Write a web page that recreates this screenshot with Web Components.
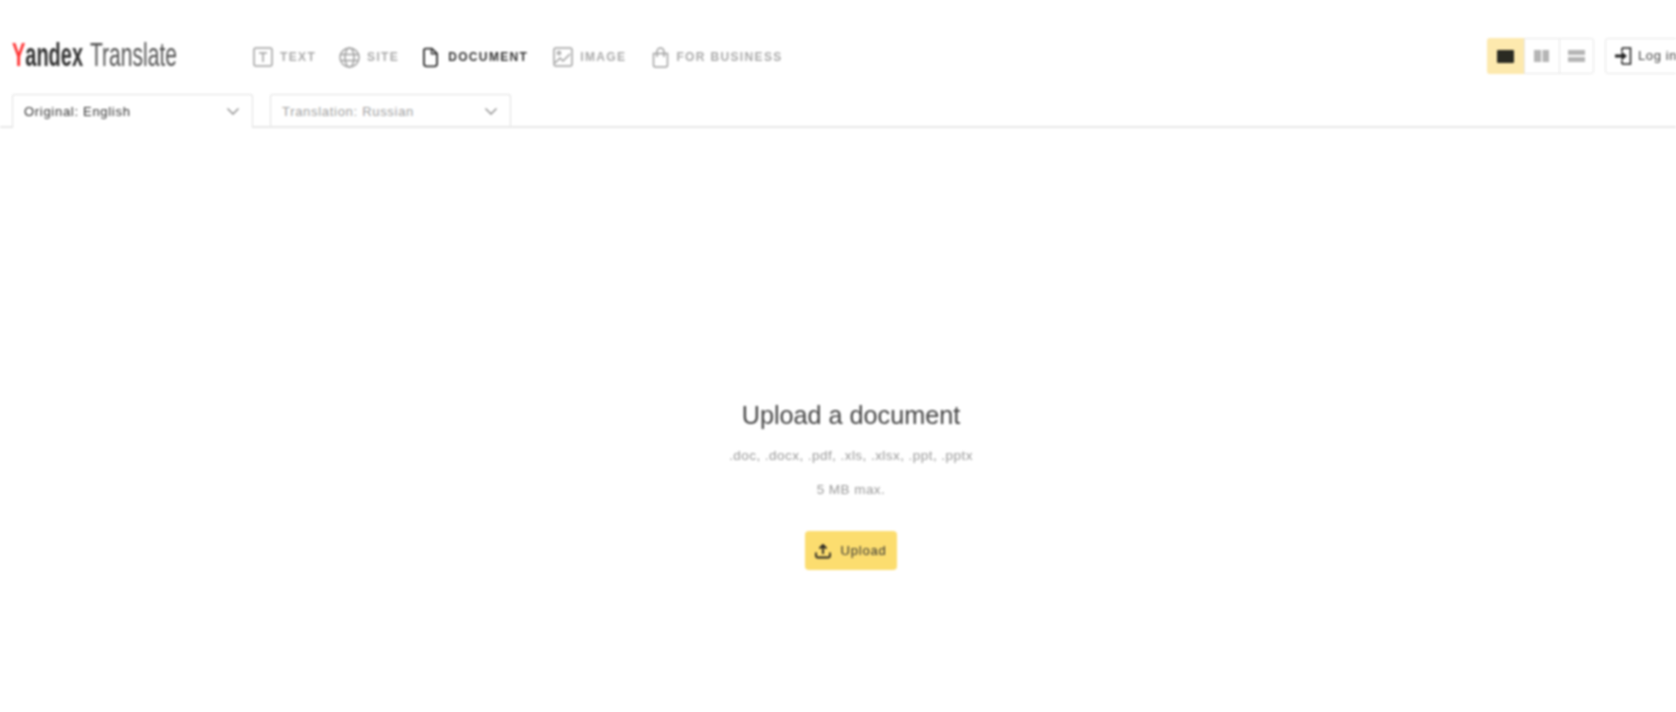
<!doctype html>
<html lang="en">
<head>
<meta charset="utf-8">
<title>Yandex Translate</title>
<style>
  html, body { margin: 0; height: 100%; background: #fff; overflow: hidden; }
  body { font-family: "Liberation Sans", Arial, sans-serif; }
  yt-app { filter: blur(0.8px); }
</style>
</head>
<body>
<yt-app>
  <yt-header slot="header"></yt-header>
  <yt-langbar slot="header"></yt-langbar>
  <yt-upload></yt-upload>
</yt-app>

<script>
// App shell ---------------------------------------------------------
class YtApp extends HTMLElement {
  constructor() {
    super();
    this.attachShadow({ mode: 'open' }).innerHTML = `
      <style>
        :host { display: flex; flex-direction: column; height: 712px; overflow: hidden; }
        .top { border-bottom: 2px solid #e8e8e8; height: 126px; flex: none; }
        .main { flex: 1; display: flex; justify-content: center; }
      </style>
      <div class="top"><slot name="header"></slot></div>
      <div class="main"><slot></slot></div>
    `;
  }
}

// Nav tab -----------------------------------------------------------
class YtTab extends HTMLElement {
  constructor() {
    super();
    this.attachShadow({ mode: 'open' }).innerHTML = `
      <style>
        :host {
          display: flex; align-items: center; gap: 7px;
          font: 700 12px "Liberation Sans", Arial, sans-serif;
          letter-spacing: 1.35px; color: #aaa;
        }
        :host([active]) { color: #333; gap: 10px; }
        ::slotted(svg) { display: block; flex: none; }
      </style>
      <slot name="icon"></slot><slot></slot>
    `;
  }
}

// Header ------------------------------------------------------------
class YtHeader extends HTMLElement {
  constructor() {
    super();
    this.attachShadow({ mode: 'open' }).innerHTML = `
      <style>
        :host {
          display: flex; align-items: center; box-sizing: border-box;
          width: 1700px; height: 94px; padding: 38px 0 20px 12px;
        }
        .logo {
          width: 241px; height: 36px; flex: none; display: flex; align-items: center; white-space: nowrap;
          padding-bottom: 4px; box-sizing: border-box;
          font: 400 34px "Liberation Sans", Arial, sans-serif;
        }
        .logo span { display: block; transform-origin: 0 50%; }
        .yandex { width: 78px; font-weight: 700; color: #333; transform: scaleX(.587); }
        .yandex b { color: #f33; }
        .translate { color: #555; transform: scaleX(.62); }
        nav { display: flex; gap: 24px; margin-top: 2px; }
        .site { margin-left: -1px; }
        .image { margin-left: 1px; }
        .biz { margin-left: 2px; }
        .views {
          margin-left: auto; display: flex; height: 36px; box-sizing: border-box;
          border: 1px solid #e6e6e6; border-radius: 3px; width: 107px; flex: none;
        }
        .views div { flex: 1; display: flex; align-items: center; justify-content: center; }
        .views div + div { border-left: 1px solid #e6e6e6; }
        .views .on { background: #fde9ae; margin: -1px 0 -1px -1px; border-radius: 3px 0 0 3px; flex: 0 0 37px; }
        .login {
          margin-left: 11px; margin-right: 9px; width: 86px; height: 36px; box-sizing: border-box; flex: none;
          border: 1px solid #e6e6e6; border-radius: 3px; display: flex; align-items: center; gap: 6px;
          padding-left: 9px; font: 13px "Liberation Sans", Arial, sans-serif; letter-spacing: .6px; color: #444;
        }
        .login span { margin-top: -1px; }
      </style>
      <div class="logo"><span class="yandex"><b>Y</b>andex</span><span class="translate">Translate</span></div>
      <nav>
        <yt-tab>
          <svg slot="icon" width="20" height="20" viewBox="0 0 20 20" fill="none" stroke="#a0a0a0" stroke-width="1.5"><rect x="1" y="1" width="18" height="18" rx="2"/><path d="M6 6h8M10 6v9"/></svg>TEXT
        </yt-tab>
        <yt-tab class="site">
          <svg slot="icon" width="21" height="21" viewBox="0 0 21 21" fill="none" stroke="#a0a0a0" stroke-width="1.5"><circle cx="10.5" cy="10.5" r="9.5"/><ellipse cx="10.5" cy="10.5" rx="4.5" ry="9.5"/><path d="M1 7.5h19M1 13.5h19"/></svg>SITE
        </yt-tab>
        <yt-tab active>
          <svg slot="icon" width="15" height="21" viewBox="0 0 16 21" fill="none" stroke="#333" stroke-width="2"><path d="M3 1h6.500L15 6.500V17a3 3 0 0 1-3 3H4a3 3 0 0 1-3-3V3a2 2 0 0 1 2-2z"/><path d="M9 1v5.500h5.500" stroke-width="1.500"/></svg>DOCUMENT
        </yt-tab>
        <yt-tab class="image">
          <svg slot="icon" width="20" height="20" viewBox="0 0 20 20" fill="none" stroke="#a0a0a0" stroke-width="1.5"><rect x="1" y="1" width="18" height="18" rx="2"/><circle cx="6" cy="6" r="1.500"/><path d="M2 16l5-5 3 3 7-7"/></svg>IMAGE
        </yt-tab>
        <yt-tab class="biz">
          <svg slot="icon" width="17" height="21" viewBox="0 0 17 21" fill="none" stroke="#a0a0a0" stroke-width="1.5"><path d="M1.500 6.500h14V18a2 2 0 0 1-2 2h-10a2 2 0 0 1-2-2z"/><path d="M5 10V4.500a3.500 3.500 0 0 1 7 0V10"/></svg>FOR BUSINESS
        </yt-tab>
      </nav>
      <div class="views">
        <div class="on"><svg width="17" height="13"><rect width="17" height="13" rx="1" fill="#2a2a22"/></svg></div>
        <div><svg width="15" height="12" fill="#b5b5b5"><rect width="7" height="12"/><rect x="8.500" width="6.500" height="12"/></svg></div>
        <div><svg width="17" height="12" fill="#b5b5b5"><rect width="17" height="5"/><rect y="7" width="17" height="5"/></svg></div>
      </div>
      <div class="login">
        <svg width="17" height="18" viewBox="0 0 17 18" fill="none" stroke="#222" stroke-width="1.600"><path d="M7 1h8.500v16H7M7 1v3.500M7 13.500V17"/><path d="M0 9h8" stroke-width="3"/><path d="M6.500 4.500L12 9l-5.500 4.500z" fill="#222" stroke="none"/></svg>
        <span>Log in</span>
      </div>
    `;
  }
}

// Language tab ------------------------------------------------------
class YtLang extends HTMLElement {
  constructor() {
    super();
    this.attachShadow({ mode: 'open' }).innerHTML = `
      <style>
        :host {
          display: flex; align-items: center; justify-content: space-between; box-sizing: border-box;
          width: 241px; height: 34px; padding: 0 13px 0 11px;
          background: #fff; border: 1px solid #e0e0e0; border-bottom: 0; border-radius: 3px 3px 0 0;
          font: 13px "Liberation Sans", Arial, sans-serif; letter-spacing: .7px; color: #333;
        }
        :host([muted]) { color: #a0a0a0; height: 32px; padding-top: 2px; }
        svg { display: block; flex: none; }
      </style>
      <slot></slot>
      <svg width="12" height="7" viewBox="0 0 12 7" fill="none" stroke="#8a8a8a" stroke-width="1.300"><path d="M.5.5L6 6l5.500-5.500"/></svg>
    `;
  }
}

class YtLangbar extends HTMLElement {
  constructor() {
    super();
    this.attachShadow({ mode: 'open' }).innerHTML = `
      <style>
        :host { display: flex; gap: 17px; align-items: flex-start; padding-left: 12px; }
      </style>
      <yt-lang>Original: English</yt-lang>
      <yt-lang muted>Translation: Russian</yt-lang>
    `;
  }
}

// Upload panel ------------------------------------------------------
class YtUpload extends HTMLElement {
  constructor() {
    super();
    this.attachShadow({ mode: 'open' }).innerHTML = `
      <style>
        :host {
          display: flex; flex-direction: column; align-items: center;
          padding-top: 272px; margin-left: 26px;
          font-family: "Liberation Sans", Arial, sans-serif;
        }
        h1 { margin: 0; font-size: 25.200px; font-weight: 400; line-height: 30px; color: #444; }
        p { margin: 0; font-size: 13.500px; line-height: 16px; letter-spacing: .45px; color: #999; }
        .formats { margin-top: 18px; }
        .size { margin-top: 18px; }
        button {
          margin-top: 33px; width: 92px; height: 39px; border: 0; border-radius: 4px; padding: 0;
          background: #fcdd6f; color: #333; display: flex; align-items: center; justify-content: center; gap: 9px;
          font: 13px "Liberation Sans", Arial, sans-serif; letter-spacing: .8px;
        }
        svg { display: block; }
      </style>
      <h1>Upload a document</h1>
      <p class="formats">.doc, .docx, .pdf, .xls, .xlsx, .ppt, .pptx</p>
      <p class="size">5 MB max.</p>
      <button>
        <svg width="16" height="16" viewBox="0 0 16 16" fill="none" stroke="#222" stroke-width="1.800"><path d="M1 9.500V13a1.500 1.500 0 0 0 1.500 1.500h11A1.500 1.500 0 0 0 15 13V9.500"/><path d="M8 11V2.500M4.500 5.500L8 2l3.500 3.500"/></svg>
        Upload
      </button>
    `;
  }
}

// Register elements -------------------------------------------------
customElements.define('yt-tab', YtTab);
customElements.define('yt-header', YtHeader);
customElements.define('yt-lang', YtLang);
customElements.define('yt-langbar', YtLangbar);
customElements.define('yt-upload', YtUpload);
customElements.define('yt-app', YtApp);
</script>
</body>
</html>
